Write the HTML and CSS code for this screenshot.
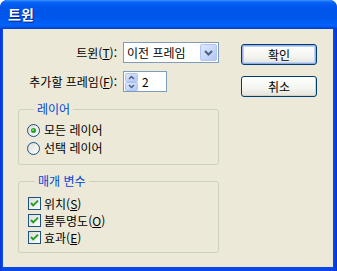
FILE: index.html
```html
<!DOCTYPE html>
<html lang="ko">
<head>
<meta charset="utf-8">
<title>트윈</title>
<link rel="stylesheet" href="styles.css">
</head>
<body>
<div class="window">
  <div class="titlebar"><span class="title">트윈</span></div>
  <div class="client">
    <div class="main">
      <div class="row row-combo">
        <label class="lbl">트윈(<u>T</u>):</label>
        <div class="combo">
          <span class="combo-text">이전 프레임</span>
          <span class="combo-btn">
            <svg width="17" height="17" viewBox="0 0 17 17">
              <defs>
                <linearGradient id="cb" x1="0" y1="0" x2="1" y2="1">
                  <stop offset="0" stop-color="#E1EAFD"/>
                  <stop offset="1" stop-color="#B0C6F5"/>
                </linearGradient>
              </defs>
              <rect x="0.5" y="0.5" width="16" height="16" rx="1.5" fill="url(#cb)" stroke="#AFC4F2"/>
              <path d="M5 7 L8.5 10.5 L12 7" fill="none" stroke="#4D6185" stroke-width="2"/>
            </svg>
          </span>
        </div>
      </div>
      <div class="row row-spin">
        <label class="lbl">추가할 프레임(<u>F</u>):</label>
        <div class="spin">
          <span class="spin-btns">
            <svg width="13" height="18" viewBox="0 0 13 18">
              <defs>
                <linearGradient id="sb" x1="0" y1="0" x2="1" y2="1">
                  <stop offset="0" stop-color="#E1EAFD"/>
                  <stop offset="1" stop-color="#B0C6F5"/>
                </linearGradient>
              </defs>
              <rect x="0.5" y="0.5" width="12" height="8" rx="1" fill="url(#sb)" stroke="#AFC4F2"/>
              <rect x="0.5" y="9.5" width="12" height="8" rx="1" fill="url(#sb)" stroke="#AFC4F2"/>
              <path d="M4 6 L6.5 3.5 L9 6" fill="none" stroke="#4D6185" stroke-width="1.5"/>
              <path d="M4 12 L6.5 14.5 L9 12" fill="none" stroke="#4D6185" stroke-width="1.5"/>
            </svg>
          </span>
          <span class="spin-text">2</span>
        </div>
      </div>

      <fieldset class="group group-layer">
        <legend>레이어</legend>
        <div class="opt radio-row">
          <svg class="ico" width="13" height="13" viewBox="0 0 13 13">
            <defs>
              <linearGradient id="rg" x1="0" y1="0" x2="1" y2="1">
                <stop offset="0" stop-color="#DCDCD4"/>
                <stop offset="1" stop-color="#FFFFFF"/>
              </linearGradient>
            </defs>
            <circle cx="6.5" cy="6.5" r="6" fill="url(#rg)" stroke="#1C5180"/>
            <circle cx="6.5" cy="6.5" r="2.5" fill="#21A121"/>
            <circle cx="6" cy="6" r="1" fill="#7BE07B"/>
          </svg>
          <span>모든 레이어</span>
        </div>
        <div class="opt radio-row">
          <svg class="ico" width="13" height="13" viewBox="0 0 13 13">
            <circle cx="6.5" cy="6.5" r="6" fill="url(#rg)" stroke="#1C5180"/>
          </svg>
          <span>선택 레이어</span>
        </div>
      </fieldset>

      <fieldset class="group group-param">
        <legend>매개 변수</legend>
        <div class="opt check-row">
          <svg class="ico" width="13" height="13" viewBox="0 0 13 13">
            <defs>
              <linearGradient id="kg" x1="0" y1="0" x2="1" y2="1">
                <stop offset="0" stop-color="#DCDCD4"/>
                <stop offset="1" stop-color="#FFFFFF"/>
              </linearGradient>
            </defs>
            <rect x="0.5" y="0.5" width="12" height="12" fill="url(#kg)" stroke="#1C5180"/>
            <path d="M3 6 L5.2 8.4 L10 3.6" fill="none" stroke="#21A121" stroke-width="2"/>
          </svg>
          <span>위치(<u>S</u>)</span>
        </div>
        <div class="opt check-row">
          <svg class="ico" width="13" height="13" viewBox="0 0 13 13">
            <rect x="0.5" y="0.5" width="12" height="12" fill="url(#kg)" stroke="#1C5180"/>
            <path d="M3 6 L5.2 8.4 L10 3.6" fill="none" stroke="#21A121" stroke-width="2"/>
          </svg>
          <span>불투명도(<u>O</u>)</span>
        </div>
        <div class="opt check-row">
          <svg class="ico" width="13" height="13" viewBox="0 0 13 13">
            <rect x="0.5" y="0.5" width="12" height="12" fill="url(#kg)" stroke="#1C5180"/>
            <path d="M3 6 L5.2 8.4 L10 3.6" fill="none" stroke="#21A121" stroke-width="2"/>
          </svg>
          <span>효과(<u>E</u>)</span>
        </div>
      </fieldset>
    </div>

    <div class="buttons">
      <button class="btn btn-default">확인</button>
      <button class="btn">취소</button>
    </div>
  </div>
</div>
</body>
</html>
```

FILE: styles.css
```css
html, body {
  margin: 0;
  padding: 0;
  width: 337px;
  height: 271px;
  overflow: hidden;
  background: #ffffff;
}

.window {
  width: 337px;
  height: 271px;
  box-sizing: border-box;
  display: flex;
  flex-direction: column;
  border-radius: 7px 7px 0 0;
  background: linear-gradient(90deg, #0733D0 0, #0848E8 2px, #0848E8 334px, #0733D0 337px);
  font-family: "Noto Sans CJK KR", "Noto Sans", sans-serif;
  font-size: 12px;
  color: #000;
  overflow: hidden;
}

.titlebar {
  height: 29px;
  flex: none;
  box-sizing: border-box;
  padding: 0 0 0 8px;
  display: flex;
  align-items: center;
  border-radius: 7px 7px 0 0;
  background: linear-gradient(180deg,
    #3D95FF 0,
    #0A66F5 2px,
    #0058EE 6px,
    #0054E8 14px,
    #005CF4 22px,
    #0063FA 26px,
    #0046D8 28px,
    #0040D0 29px);
}

.title {
  color: #fff;
  font-weight: bold;
  font-size: 14px;
  line-height: 16px;
  text-shadow: 1px 1px 0 #0A1E8A;
  padding-bottom: 1px;
}

.client {
  flex: 1;
  margin: 0 4px 4px 3px;
  background: #ECE9D8;
  display: flex;
  gap: 22px;
  padding: 0 0 0 15px;
}

.main {
  width: 201px;
  display: flex;
  flex-direction: column;
  padding-top: 13px;
}

.row {
  display: flex;
  align-items: center;
  gap: 6px;
}

.row-spin {
  margin-top: 8px;
}

.lbl {
  width: 99px;
  text-align: right;
  white-space: nowrap;
  line-height: 14px;
}

u {
  text-decoration: underline;
  text-underline-offset: 1px;
}

.combo {
  width: 96px;
  height: 21px;
  box-sizing: border-box;
  border: 1px solid #7F9DB9;
  background: #fff;
  display: flex;
  align-items: center;
  padding: 0 1px 0 3px;
}

.combo-text {
  flex: 1;
  white-space: nowrap;
  line-height: 14px;
}

.combo-btn {
  display: flex;
  width: 17px;
  height: 17px;
}

.spin {
  width: 44px;
  height: 21px;
  box-sizing: border-box;
  border: 1px solid #7F9DB9;
  background: #fff;
  display: flex;
  align-items: center;
  padding: 0 0 0 1px;
  gap: 4px;
}

.spin-btns {
  display: flex;
  width: 13px;
  height: 18px;
}

.spin-text {
  line-height: 14px;
}

.group {
  margin: 0;
  padding: 0;
  border: 1px solid #D0D0BF;
  border-radius: 3px;
  min-width: 0;
}

.group legend {
  margin-left: 7px;
  padding: 0 3px;
  color: #0046D5;
  line-height: 14px;
}

.group-layer {
  margin-top: 10px;
  padding: 5px 0 7px 8px;
}

.group-param {
  margin-top: 9px;
  padding: 7px 0 6px 9px;
}

.opt {
  display: flex;
  align-items: center;
  white-space: nowrap;
  line-height: 14px;
}

.radio-row {
  height: 18px;
  gap: 4px;
}

.check-row {
  height: 17px;
  gap: 3px;
}

.ico {
  flex: none;
  display: block;
}

.buttons {
  display: flex;
  flex-direction: column;
  gap: 11px;
  padding-top: 15px;
}

.btn {
  width: 76px;
  height: 21px;
  box-sizing: border-box;
  margin: 0;
  padding: 0;
  border: 1px solid #003C74;
  border-radius: 3px;
  background: linear-gradient(180deg, #FFFFFF 0, #F4F4F0 60%, #E3E2DA 100%);
  font-family: inherit;
  font-size: 12px;
  line-height: 14px;
  color: #000;
  box-shadow: inset -1px -1px 0 #D6D0C5;
}

.btn-default {
  box-shadow: inset 0 0 0 1px #97AEE2, inset 0 0 0 2px #BCD4F6;
}
```
